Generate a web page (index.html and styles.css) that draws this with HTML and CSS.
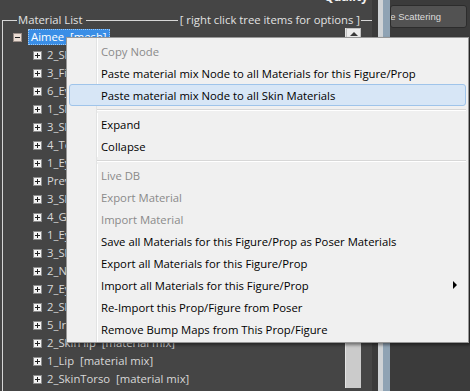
FILE: index.html
```html
<!DOCTYPE html>
<html>
	<head>
		<meta charset="utf-8">
		<title>Material List</title>
		<link rel="stylesheet" href="styles.css">
	</head>
	<body>
		<div class="app">
			<section class="left">
				<div class="topbar"><span class="quality">Quality</span></div>
				<fieldset class="group">
					<legend class="group-head">
						<span>Material List</span>
						<span class="head-line"></span>
						<span>[ right click tree items for options ]</span>
					</legend>
					<div class="tree-wrap">
						<ul class="tree">
							<li class="row root">
								<svg class="exp" width="9" height="9" viewBox="0 0 9 9"><rect x="0.5" y="0.5" width="8" height="8" fill="#eadcd3" stroke="#9a8e88"/><path d="M2 4.5h5" stroke="#222" stroke-width="1"/></svg>
								<span class="label selected">Aimee&nbsp;&nbsp;[mesh]</span>
							</li>
							<li class="row"><svg class="exp" width="9" height="9" viewBox="0 0 9 9"><rect x="0.5" y="0.5" width="8" height="8" fill="#f4f4f4" stroke="#8c8c8c"/><path d="M2 4.5h5M4.5 2v5" stroke="#222"/></svg><span class="label">2_SkinFace&nbsp;&nbsp;[material mix]</span></li>
							<li class="row"><svg class="exp" width="9" height="9" viewBox="0 0 9 9"><rect x="0.5" y="0.5" width="8" height="8" fill="#f4f4f4" stroke="#8c8c8c"/><path d="M2 4.5h5M4.5 2v5" stroke="#222"/></svg><span class="label">3_Fingernails&nbsp;&nbsp;[material mix]</span></li>
							<li class="row"><svg class="exp" width="9" height="9" viewBox="0 0 9 9"><rect x="0.5" y="0.5" width="8" height="8" fill="#f4f4f4" stroke="#8c8c8c"/><path d="M2 4.5h5M4.5 2v5" stroke="#222"/></svg><span class="label">6_Eyelashes&nbsp;&nbsp;[material mix]</span></li>
							<li class="row"><svg class="exp" width="9" height="9" viewBox="0 0 9 9"><rect x="0.5" y="0.5" width="8" height="8" fill="#f4f4f4" stroke="#8c8c8c"/><path d="M2 4.5h5M4.5 2v5" stroke="#222"/></svg><span class="label">1_SkinArms&nbsp;&nbsp;[material mix]</span></li>
							<li class="row"><svg class="exp" width="9" height="9" viewBox="0 0 9 9"><rect x="0.5" y="0.5" width="8" height="8" fill="#f4f4f4" stroke="#8c8c8c"/><path d="M2 4.5h5M4.5 2v5" stroke="#222"/></svg><span class="label">3_SkinLegs&nbsp;&nbsp;[material mix]</span></li>
							<li class="row"><svg class="exp" width="9" height="9" viewBox="0 0 9 9"><rect x="0.5" y="0.5" width="8" height="8" fill="#f4f4f4" stroke="#8c8c8c"/><path d="M2 4.5h5M4.5 2v5" stroke="#222"/></svg><span class="label">4_Teeth&nbsp;&nbsp;[material mix]</span></li>
							<li class="row"><svg class="exp" width="9" height="9" viewBox="0 0 9 9"><rect x="0.5" y="0.5" width="8" height="8" fill="#f4f4f4" stroke="#8c8c8c"/><path d="M2 4.5h5M4.5 2v5" stroke="#222"/></svg><span class="label">1_EyeSocket&nbsp;&nbsp;[material mix]</span></li>
							<li class="row"><svg class="exp" width="9" height="9" viewBox="0 0 9 9"><rect x="0.5" y="0.5" width="8" height="8" fill="#f4f4f4" stroke="#8c8c8c"/><path d="M2 4.5h5M4.5 2v5" stroke="#222"/></svg><span class="label">Preview&nbsp;&nbsp;[material mix]</span></li>
							<li class="row"><svg class="exp" width="9" height="9" viewBox="0 0 9 9"><rect x="0.5" y="0.5" width="8" height="8" fill="#f4f4f4" stroke="#8c8c8c"/><path d="M2 4.5h5M4.5 2v5" stroke="#222"/></svg><span class="label">3_SkinHip&nbsp;&nbsp;[material mix]</span></li>
							<li class="row"><svg class="exp" width="9" height="9" viewBox="0 0 9 9"><rect x="0.5" y="0.5" width="8" height="8" fill="#f4f4f4" stroke="#8c8c8c"/><path d="M2 4.5h5M4.5 2v5" stroke="#222"/></svg><span class="label">4_Gums&nbsp;&nbsp;[material mix]</span></li>
							<li class="row"><svg class="exp" width="9" height="9" viewBox="0 0 9 9"><rect x="0.5" y="0.5" width="8" height="8" fill="#f4f4f4" stroke="#8c8c8c"/><path d="M2 4.5h5M4.5 2v5" stroke="#222"/></svg><span class="label">1_EyeWhite&nbsp;&nbsp;[material mix]</span></li>
							<li class="row"><svg class="exp" width="9" height="9" viewBox="0 0 9 9"><rect x="0.5" y="0.5" width="8" height="8" fill="#f4f4f4" stroke="#8c8c8c"/><path d="M2 4.5h5M4.5 2v5" stroke="#222"/></svg><span class="label">3_SkinFeet&nbsp;&nbsp;[material mix]</span></li>
							<li class="row"><svg class="exp" width="9" height="9" viewBox="0 0 9 9"><rect x="0.5" y="0.5" width="8" height="8" fill="#f4f4f4" stroke="#8c8c8c"/><path d="M2 4.5h5M4.5 2v5" stroke="#222"/></svg><span class="label">2_Nostrils&nbsp;&nbsp;[material mix]</span></li>
							<li class="row"><svg class="exp" width="9" height="9" viewBox="0 0 9 9"><rect x="0.5" y="0.5" width="8" height="8" fill="#f4f4f4" stroke="#8c8c8c"/><path d="M2 4.5h5M4.5 2v5" stroke="#222"/></svg><span class="label">7_Eyebrows&nbsp;&nbsp;[material mix]</span></li>
							<li class="row"><svg class="exp" width="9" height="9" viewBox="0 0 9 9"><rect x="0.5" y="0.5" width="8" height="8" fill="#f4f4f4" stroke="#8c8c8c"/><path d="M2 4.5h5M4.5 2v5" stroke="#222"/></svg><span class="label">2_SkinNeck&nbsp;&nbsp;[material mix]</span></li>
							<li class="row"><svg class="exp" width="9" height="9" viewBox="0 0 9 9"><rect x="0.5" y="0.5" width="8" height="8" fill="#f4f4f4" stroke="#8c8c8c"/><path d="M2 4.5h5M4.5 2v5" stroke="#222"/></svg><span class="label">5_Iris&nbsp;&nbsp;[material mix]</span></li>
							<li class="row"><svg class="exp" width="9" height="9" viewBox="0 0 9 9"><rect x="0.5" y="0.5" width="8" height="8" fill="#f4f4f4" stroke="#8c8c8c"/><path d="M2 4.5h5M4.5 2v5" stroke="#222"/></svg><span class="label">2_Skin lip&nbsp;&nbsp;[material mix]</span></li>
							<li class="row"><svg class="exp" width="9" height="9" viewBox="0 0 9 9"><rect x="0.5" y="0.5" width="8" height="8" fill="#f4f4f4" stroke="#8c8c8c"/><path d="M2 4.5h5M4.5 2v5" stroke="#222"/></svg><span class="label">1_Lip&nbsp;&nbsp;[material mix]</span></li>
							<li class="row"><svg class="exp" width="9" height="9" viewBox="0 0 9 9"><rect x="0.5" y="0.5" width="8" height="8" fill="#f4f4f4" stroke="#8c8c8c"/><path d="M2 4.5h5M4.5 2v5" stroke="#222"/></svg><span class="label">2_SkinTorso&nbsp;&nbsp;[material mix]</span></li>
						</ul>
						<div class="vscroll">
							<div class="vscroll-up"><span class="arrow-up"></span></div>
						</div>
					</div>
				</fieldset>
			</section>
			<div class="splitter"></div>
			<section class="right">
				<button class="panel-btn"><span>Subsurface Scattering</span></button>
			</section>
		</div>

		<ul class="menu">
			<li class="item disabled">Copy Node</li>
			<li class="item">Paste material mix Node to all Materials for this Figure/Prop</li>
			<li class="item hover">Paste material mix Node to all Skin Materials</li>
			<li class="sep"></li>
			<li class="item">Expand</li>
			<li class="item">Collapse</li>
			<li class="sep"></li>
			<li class="item disabled">Live DB</li>
			<li class="item disabled">Export Material</li>
			<li class="item disabled">Import Material</li>
			<li class="item">Save all Materials for this Figure/Prop as Poser Materials</li>
			<li class="item">Export all Materials for this Figure/Prop</li>
			<li class="item">Import all Materials for this Figure/Prop<span class="sub-arrow"></span></li>
			<li class="item">Re-Import this Prop/Figure from Poser</li>
			<li class="item">Remove Bump Maps from This Prop/Figure</li>
		</ul>
	</body>
</html>
```

FILE: styles.css
```css
* {
	margin: 0;
	padding: 0;
	box-sizing: border-box;
}
body {
	width: 470px;
	height: 391px;
	overflow: hidden;
	background: #454545;
	font-family: "Open Sans", "Liberation Sans", sans-serif;
	font-size: 11.3px;
	color: #d8d8d8;
}
.app {
	display: flex;
	height: 391px;
}
.left {
	flex: none;
	width: 372px;
	overflow: hidden;
}
.topbar {
	height: 12px;
	overflow: hidden;
	padding-left: 324px;
}
.quality {
	display: block;
	margin-top: -10px;
	line-height: 13px;
	font-size: 12px;
	font-weight: bold;
	color: #f2f2f2;
}
.group {
	margin-left: 2px;
	height: 420px;
	border: 1px solid #d6d6d6;
	padding: 0 11px 0 0;
}
.group-head {
	display: flex;
	align-items: center;
	width: 344px;
	margin-left: 14px;
	padding: 0 1px;
	line-height: 16px;
	color: #e2e2e2;
}
.head-line {
	flex: 1;
	height: 1px;
	margin: 1px 2px 0 3px;
	background: #d6d6d6;
}
.tree-wrap {
	display: flex;
}
.tree {
	flex: 1;
	list-style: none;
	padding-left: 10px;
}
.row {
	display: flex;
	align-items: center;
	height: 18px;
	padding-left: 20px;
	white-space: nowrap;
}
.row .exp {
	flex: none;
	margin-right: 5px;
}
.row.root {
	padding-left: 0;
}
.row.root .exp {
	margin-right: 6px;
}
.label {
	line-height: 16px;
}
.selected {
	padding: 0 3px;
	background: #3a8ee6;
	color: #fff;
	outline: 1px dotted #9cc8f5;
	outline-offset: -1px;
}
.vscroll {
	width: 16px;
	background: #cbcbcb;
	border-left: 1px solid #e4e4e4;
}
.vscroll-up {
	display: flex;
	justify-content: center;
	padding-top: 3px;
	height: 17px;
	background: #ececec;
	border: 1px solid #c2c2c2;
}
.arrow-up {
	width: 0;
	height: 0;
	border-left: 4px solid transparent;
	border-right: 4px solid transparent;
	border-bottom: 4px solid #3a3a3a;
}
.splitter {
	flex: none;
	width: 18px;
	background: linear-gradient(to right, #3a3a3a 0 6px, #cfd3d6 6px 11px, #8fa3b4 11px 18px);
}
.right {
	flex: 1;
	min-width: 0;
	overflow: hidden;
	padding: 5px 3px 0 0;
	background: #3b3b3b;
}
.panel-btn {
	display: flex;
	justify-content: flex-end;
	align-items: center;
	width: 100%;
	height: 23px;
	overflow: hidden;
	background: #525252;
	border: 1px solid #2c2c2c;
	border-radius: 3px;
	color: #dcdcdc;
	font-family: "Liberation Sans", sans-serif;
	font-size: 9.5px;
	padding-right: 25px;
	white-space: nowrap;
}
.panel-btn span {
	flex: none;
}

/* context menu */
.menu {
	position: absolute;
	left: 66px;
	top: 37px;
	width: 403px;
	list-style: none;
	padding: 2px 0;
	border: 1px solid #979797;
	background: linear-gradient(to right, #f0f0f0 0 29px, #e2e3e3 29px 30px, #ffffff 30px 31px, #f0f0f0 31px);
	box-shadow: 2px 2px 3px rgba(0, 0, 0, 0.45);
	color: #000;
}
.item {
	display: flex;
	align-items: center;
	height: 22px;
	margin: 0 2px;
	padding-left: 31px;
	border: 1px solid transparent;
	border-radius: 3px;
	white-space: nowrap;
}
.item.disabled {
	color: #8a8a8a;
}
.item.hover {
	background: #d7e6f6;
	border-color: #9fc4ea;
}
.sep {
	height: 7px;
	margin: 0 2px 0 30px;
	background: linear-gradient(#f0f0f0 0 3px, #d7d7d7 3px 4px, #ffffff 4px 5px, #f0f0f0 5px);
}
.sub-arrow {
	margin-left: auto;
	margin-right: 8px;
	width: 0;
	height: 0;
	border-top: 4px solid transparent;
	border-bottom: 4px solid transparent;
	border-left: 4px solid #000;
}
```
